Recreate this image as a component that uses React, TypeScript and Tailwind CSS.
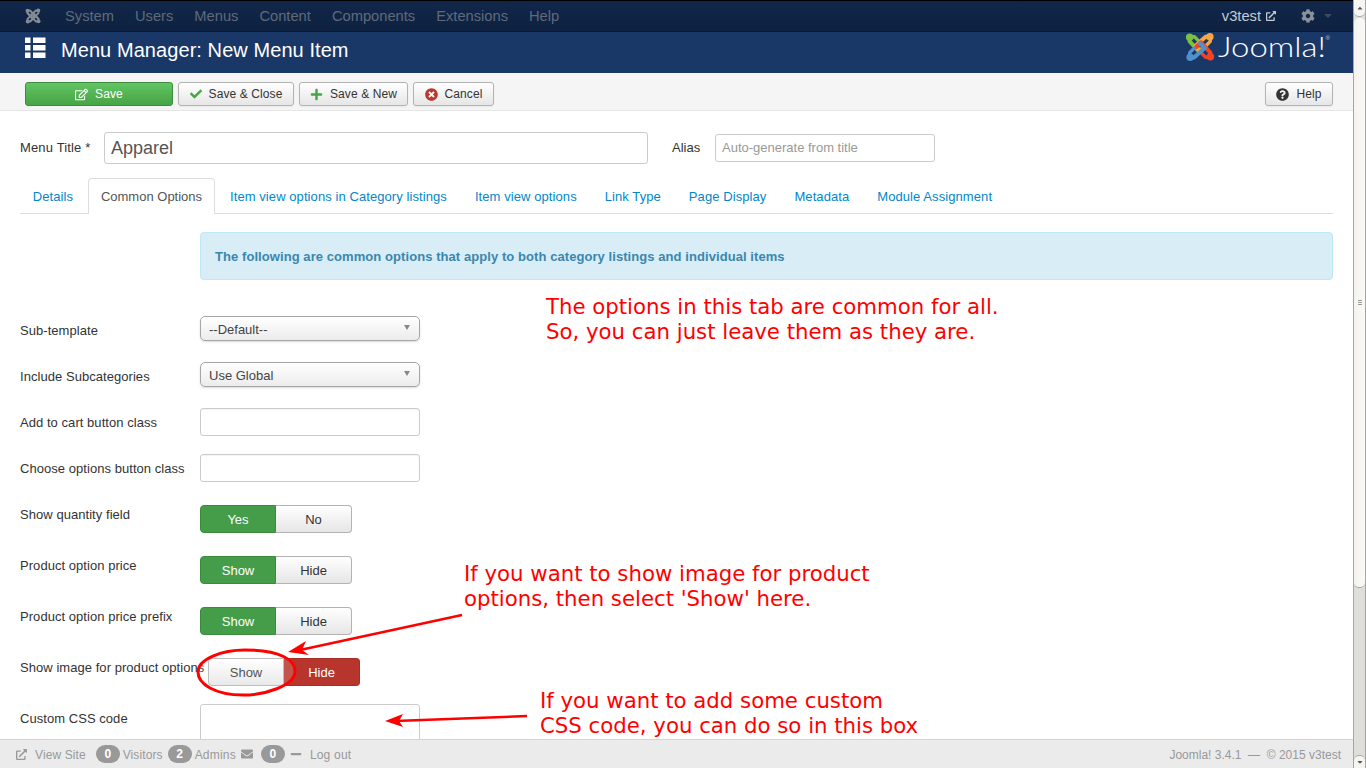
import React from "react";
import { FaCheck, FaPlus, FaTimesCircle, FaQuestionCircle, FaRegEdit, FaExternalLinkAlt, FaCog, FaEnvelope, FaMinus, FaCaretUp, FaCaretDown } from "react-icons/fa";

const F = { fontFamily: '"Liberation Sans", Arial, sans-serif' };

function JoomlaMark({ size, mono }: { size: number; mono?: boolean }) {
  const colors = mono ? ["#858b95", "#858b95", "#858b95", "#858b95"] : ["#7ac143", "#f9a541", "#f44321", "#5091cd"];
  return (
    <svg width={size} height={size} viewBox="0 0 32 32" fill="none" strokeLinecap="round" strokeLinejoin="round">
      {colors.map((c, i) => (
        <g key={i} transform={`rotate(${i * 90} 16 16)`}>
          <path d="M5 5 L5 10 L15 21 L20 16" stroke={c} strokeWidth="4.4" />
          <path d="M5 5 L10 5 L15 10" stroke={c} strokeWidth="3.6" />
          <circle cx="5" cy="5.5" r="4" fill={c} />
        </g>
      ))}
    </svg>
  );
}

function Btn({ icon, children, w, extra }: { icon: React.ReactNode; children: React.ReactNode; w: string; extra?: string }) {
  return (
    <div className={`flex h-[24px] items-center justify-center gap-[7px] rounded-[3px] border border-[#b3b3b3] bg-gradient-to-b from-white to-[#e6e6e6] text-[12px] tracking-[0.1px] text-[#333] shadow-[0_1px_2px_rgba(0,0,0,0.05)] ${w} ${extra ?? ""}`}>
      {icon}
      <span>{children}</span>
    </div>
  );
}

function Select({ value }: { value: string }) {
  return (
    <div className="flex h-[25px] w-[220px] items-center justify-between rounded-[5px] border border-[#a6a6a6] bg-gradient-to-b from-white to-[#ececec] pl-[8px] pr-[9px] text-[13px] text-[#444] shadow-[0_1px_2px_rgba(0,0,0,0.15)]">
      <span className="pt-[2px]">{value}</span>
      <span className="mb-[2px] h-0 w-0 border-x-[3.5px] border-t-[5px] border-x-transparent border-t-[#888]" />
    </div>
  );
}

function TextBox() {
  return <div className="h-[28px] w-[220px] rounded-[3px] border border-[#ccc] bg-white shadow-[inset_0_1px_1px_rgba(0,0,0,0.05)]" />;
}

function Toggle({ a, b, red }: { a: string; b: string; red?: boolean }) {
  const on = "bg-[#469d49] border-[#3b8a3b] text-white";
  const off = "bg-gradient-to-b from-white to-[#e6e6e6] border-[#b3b3b3] text-[#333]";
  const hide = "bg-[#b8352e] border-[#a52f28] text-white";
  return (
    <div className={`flex h-[28px] w-fit text-[13px] ${red ? "ml-[8px]" : ""}`}>
      <div className={`flex w-[76px] items-center justify-center rounded-l-[4px] border pt-[2px] ${red ? off : on}`}>{a}</div>
      <div className={`flex w-[76px] items-center justify-center rounded-r-[4px] border border-l-0 pt-[2px] ${red ? hide : off}`}>{b}</div>
    </div>
  );
}

function Row({ label, h, pt, children }: { label: string; h: string; pt: string; children: React.ReactNode }) {
  return (
    <div className={`flex ${h}`}>
      <div className={`w-[180px] whitespace-nowrap text-[13px] leading-[18px] tracking-[0.05px] text-[#333] ${pt}`}>{label}</div>
      <div>{children}</div>
    </div>
  );
}

function Badge({ n }: { n: string }) {
  return <span className="flex h-[18px] w-[24px] items-center justify-center rounded-full bg-[#999] text-[12px] font-bold text-white">{n}</span>;
}

const TABS = ["Item view options in Category listings", "Item view options", "Link Type", "Page Display", "Metadata", "Module Assignment"];

export default function App() {
  return (
    <div className="relative flex h-[768px] w-[1366px] overflow-hidden bg-white" style={F}>
      <div className="flex h-full w-[1353px] flex-col overflow-hidden">
        {/* Top nav */}
        <div className="flex h-[32px] shrink-0 items-center border-y border-t-[#000] border-b-[#0b1a33] bg-gradient-to-b from-[#11274a] to-[#0e2140] pl-[25px] pr-[21px] text-[14.7px] text-[#5f6a7a]">
          <JoomlaMark size={16} mono />
          <div className="ml-[24px] flex gap-[21px]">
            {["System", "Users", "Menus", "Content", "Components", "Extensions", "Help"].map((t) => (
              <span key={t}>{t}</span>
            ))}
          </div>
          <div className="ml-auto flex items-center">
            <span className="text-[#c7ccd4]">v3test</span>
            <FaExternalLinkAlt className="ml-[5px] text-[#c7ccd4]" size={10} />
            <FaCog className="ml-[25px] text-[#8a919c]" size={14} />
            <span className="ml-[9px] h-0 w-0 border-x-[4px] border-t-[4px] border-x-transparent border-t-[#3d4a5f]" />
          </div>
        </div>
        {/* Title bar */}
        <div className="flex h-[41px] shrink-0 items-start bg-[#1a3867] pl-[25px] text-white">
          <svg width="21" height="21" viewBox="0 0 21 21" className="mt-[5px]" fill="#fff">
            <rect x="0" y="0.5" width="5.5" height="5.5" />
            <rect x="8" y="0.5" width="12.5" height="5.5" />
            <rect x="0" y="8" width="5.5" height="5.5" />
            <rect x="8" y="8" width="12.5" height="5.5" />
            <rect x="0" y="15.5" width="5.5" height="5.5" />
            <rect x="8" y="15.5" width="12.5" height="5.5" />
          </svg>
          <div className="ml-[15px] mt-[5px] text-[20px] leading-[26px] tracking-[0.07px]">Menu Manager: New Menu Item</div>
          <div className="ml-auto mr-[28px] flex items-start">
            <JoomlaMark size={30} />
            <div className="relative ml-[3px] w-[107px]">
              <span className="block origin-left scale-x-[1.22] whitespace-nowrap text-[27px] font-light leading-[34px] -mt-[2px]" style={{ fontFamily: "Lato, sans-serif" }}>Joomla!</span>
              <span className="absolute -right-[5px] top-[3px] text-[6px] leading-[6px] text-[#ccd]">®</span>
            </div>
          </div>
        </div>
        {/* Toolbar */}
        <div className="flex h-[38px] shrink-0 items-start gap-[5px] border-b border-[#e5e5e5] bg-[#f5f5f5] pl-[25px] pr-[20px] pt-[9px]">
          <div className="flex h-[24px] w-[148px] items-center justify-center gap-[7px] rounded-[3px] border border-[#3d8b3d] bg-gradient-to-b from-[#62c462] to-[#46a546] text-[12px] tracking-[0.1px] text-white">
            <FaRegEdit size={13} />
            <span>Save</span>
          </div>
          <Btn w="w-[116px]" icon={<FaCheck size={12} className="text-[#46a546]" />}>Save &amp; Close</Btn>
          <Btn w="w-[109px]" icon={<FaPlus size={13} className="text-[#46a546]" />}>Save &amp; New</Btn>
          <Btn w="w-[81px]" icon={<FaTimesCircle size={13} className="text-[#bd362f]" />}>Cancel</Btn>
          <Btn w="w-[68px]" extra="ml-auto" icon={<FaQuestionCircle size={13} className="text-[#333]" />}>Help</Btn>
        </div>
        {/* Content */}
        <div className="flex-1 overflow-hidden px-[20px] text-[13px]">
          <div className="mt-[21px] flex h-[32px] items-center">
            <div className="w-[84px] text-[13px] tracking-[0.15px] text-[#333]">Menu Title *</div>
            <div className="flex h-[32px] w-[544px] items-center rounded-[3px] border border-[#ccc] pl-[6px] text-[18px] text-[#555]">Apparel</div>
            <div className="ml-[24px] w-[43px] text-[13px] text-[#333]">Alias</div>
            <div className="flex h-[28px] w-[220px] items-center rounded-[3px] border border-[#ccc] pl-[6px] text-[13px] text-[#999]">Auto-generate from title</div>
          </div>
          <div className="mt-[14px] flex h-[36px] items-end border-b border-[#ddd] text-[13px] tracking-[0.08px] text-[#08c]">
            <div className="flex h-[35px] w-[68px] items-center justify-center pr-[2px] pt-[2px]">Details</div>
            <div className="-mb-px flex h-[36px] w-[127px] items-center justify-center rounded-t-[4px] border border-b-0 border-[#ddd] bg-white tracking-normal text-[#555]">Common Options</div>
            <div className="ml-[15px] flex h-[35px] gap-[28px] pt-[2px]">
              {TABS.map((t) => (
                <span key={t} className="flex items-center">{t}</span>
              ))}
            </div>
          </div>
          <div className="mt-[18px] ml-[180px] flex h-[48px] items-center rounded-[4px] border border-[#bce8f1] bg-[#d9edf7] pl-[14px] pt-[2px] text-[13px] font-bold tracking-[0.07px] text-[#3a87ad]">
            The following are common options that apply to both category listings and individual items
          </div>
          <div className="mt-[36px]">
            <Row label="Sub-template" h="h-[46px]" pt="pt-[6px]"><Select value="--Default--" /></Row>
            <Row label="Include Subcategories" h="h-[46px]" pt="pt-[6px]"><Select value="Use Global" /></Row>
            <Row label="Add to cart button class" h="h-[46px]" pt="pt-[6px]"><TextBox /></Row>
            <Row label="Choose options button class" h="h-[51px]" pt="pt-[6px]"><TextBox /></Row>
            <Row label="Show quantity field" h="h-[51px]" pt="pt-[1px]"><Toggle a="Yes" b="No" /></Row>
            <Row label="Product option price" h="h-[51px]" pt="pt-[1px]"><Toggle a="Show" b="Hide" /></Row>
            <Row label="Product option price prefix" h="h-[51px]" pt="pt-[1px]"><Toggle a="Show" b="Hide" /></Row>
            <Row label="Show image for product options" h="h-[46px]" pt="pt-[1px]"><Toggle a="Show" b="Hide" red /></Row>
            <Row label="Custom CSS code" h="h-[60px]" pt="pt-[6px]"><div className="h-[60px] w-[220px] rounded-[3px] border border-[#ccc] bg-white" /></Row>
          </div>
        </div>
        {/* Footer */}
        <div className="relative z-10 flex h-[29px] shrink-0 items-center border-t border-[#d4d4d4] bg-[#ebebeb] pl-[16px] pr-[12px] text-[12px] text-[#999]">
          <FaExternalLinkAlt size={11} />
          <span className="ml-[8px] pt-[2px] tracking-[0.1px]">View Site</span>
          <span className="ml-[10px]"><Badge n="0" /></span>
          <span className="ml-[3px] pt-[2px] tracking-[0.1px]">Visitors</span>
          <span className="ml-[5px]"><Badge n="2" /></span>
          <span className="ml-[3px] pt-[2px] tracking-[0.2px]">Admins</span>
          <FaEnvelope size={12} className="ml-[5px]" />
          <span className="ml-[8px]"><Badge n="0" /></span>
          <FaMinus size={12} className="ml-[5px]" />
          <span className="ml-[8px] pt-[2px] tracking-[0.2px]">Log out</span>
          <span className="ml-auto pt-[2px]">Joomla! 3.4.1 &nbsp;— &nbsp;© 2015 v3test</span>
        </div>
      </div>
      {/* Scrollbar */}
      <div className="flex h-full w-[13px] flex-col border-x border-[#a9a6a2] bg-[#dededc]">
        <div className="flex h-[17px] items-center justify-center rounded-b-[5px] border-b border-[#a9a6a2] bg-[#f6f5f3]"><FaCaretUp size={8} className="text-[#555]" /></div>
        <div className="mt-px flex h-[570px] flex-col items-center justify-center gap-[1px] rounded-[5px] border-b border-[#a9a6a2] bg-gradient-to-r from-[#f4f3f1] to-[#fbfaf8]">
          <span className="h-px w-[4px] bg-[#999]" />
          <span className="h-px w-[4px] bg-[#999]" />
          <span className="h-px w-[4px] bg-[#999]" />
        </div>
        <div className="flex-1" />
        <div className="flex h-[13px] items-center justify-center rounded-t-[5px] border-t border-[#a9a6a2] bg-[#f6f5f3]"><FaCaretDown size={8} className="text-[#555]" /></div>
      </div>
      {/* Annotations over the page */}
      <div className="pointer-events-none absolute inset-0 z-20 text-[21.25px] leading-[25px] text-[#ff0000]" style={{ fontFamily: '"DejaVu Sans", sans-serif' }}>
        <div className="absolute left-[546px] top-[294px] whitespace-nowrap">The options in this tab are common for all.<br />So, you can just leave them as they are.</div>
        <div className="absolute left-[464px] top-[561px] whitespace-nowrap">If you want to show image for product<br />options, then select 'Show' here.</div>
        <div className="absolute left-[540px] top-[688px] whitespace-nowrap">If you want to add some custom<br />CSS code, you can do so in this box</div>
        <svg className="absolute left-0 top-0" width="1366" height="768" fill="none">
          <path d="M462 615 L300 650" stroke="#f00" strokeWidth="2.5" />
          <path d="M288 652 L306 641 L302 650 L309 655 Z" fill="#f00" />
          <path d="M527 716 L395 721" stroke="#f00" strokeWidth="2.5" />
          <path d="M385 721 L403 714 L399 721 L403 727 Z" fill="#f00" />
          <path d="M245 650 C280 650 296 660 295 672 C294 686 265 695 243 695 C215 695 198 684 198 672 C198 659 222 650 245 650" stroke="#f00" strokeWidth="3" fill="rgba(255,255,255,0.15)" />
        </svg>
      </div>
    </div>
  );
}
